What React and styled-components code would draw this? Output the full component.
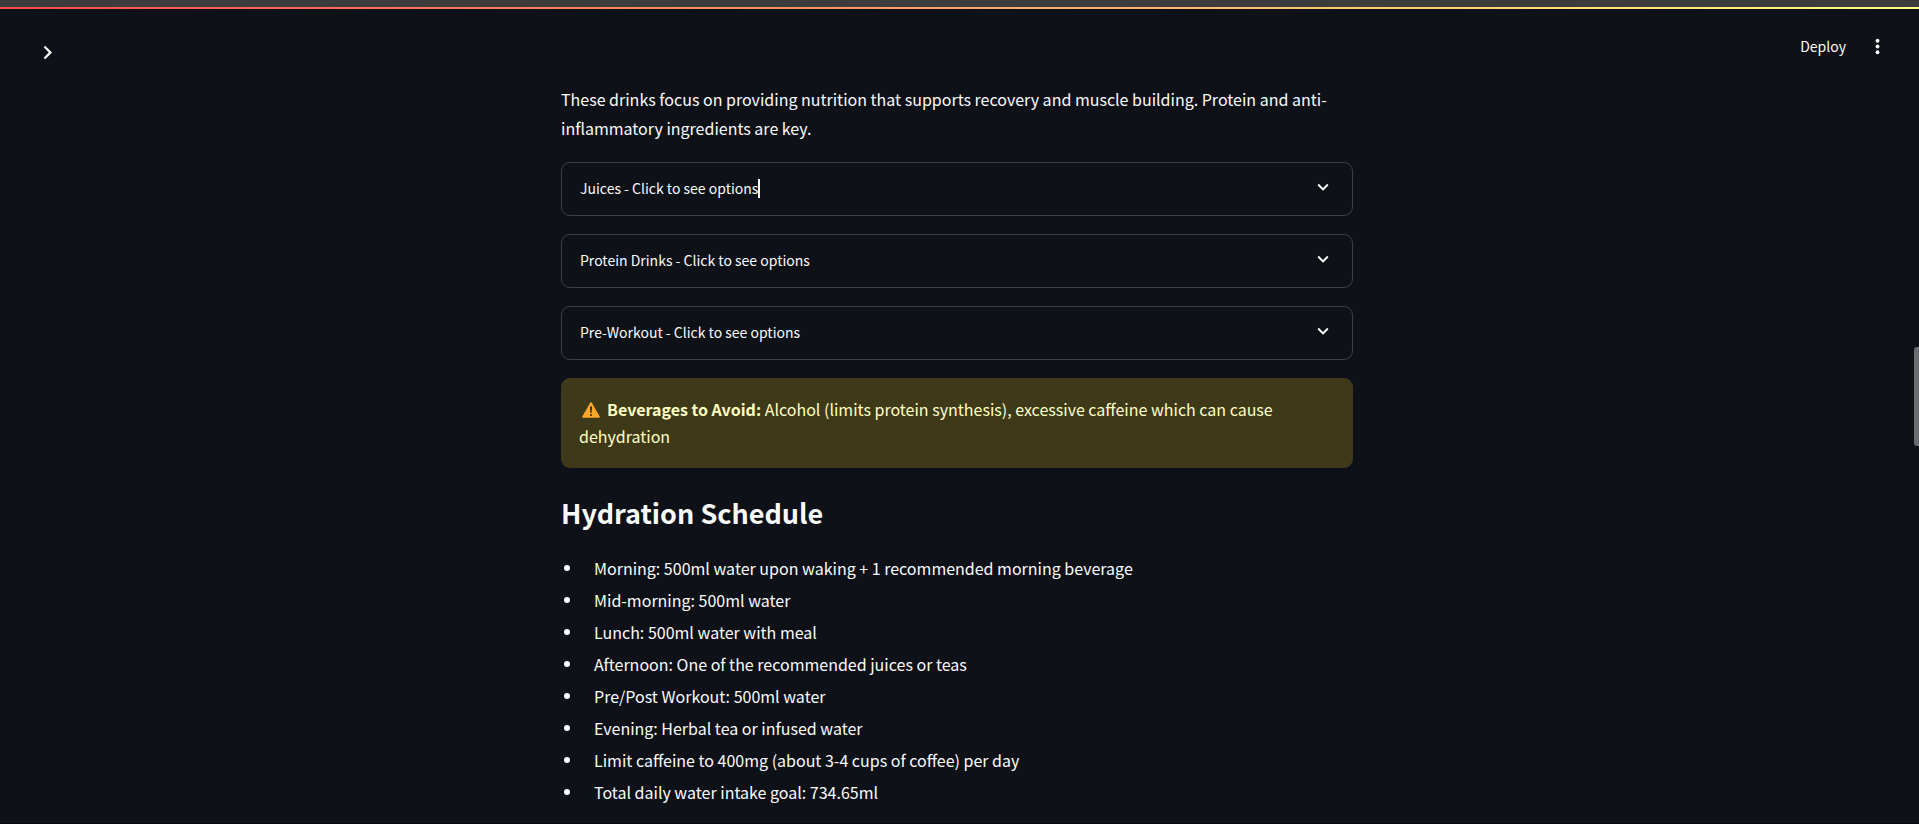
import React from "react";
import styled, { createGlobalStyle } from "styled-components";

const GlobalStyle = createGlobalStyle`
  * { box-sizing: border-box; }
  html { background: #0e1117; }
  body {
    margin: 0;
    background: #0e1117;
    color: #fafafa;
    font-family: "Source Sans Pro", "Noto Sans CJK JP", sans-serif;
    font-size: 16px;
    line-height: 29px;
  }
`;

const Shell = styled.div`
  min-height: 100vh;
  display: flex;
  flex-direction: column;
  padding-right: 5px;
  border-bottom: 1px solid #050608;
  position: relative;
`;

const TopStrip = styled.div`
  height: 9px;
  margin-right: -5px;
  background: #3c3c3c;
  display: flex;
  align-items: flex-end;
`;

const Decoration = styled.div`
  height: 2px;
  width: 100%;
  background: linear-gradient(to right, #ff4b4b, #fffd80);
`;

const Header = styled.header`
  display: flex;
  justify-content: space-between;
  align-items: flex-start;
  padding: 23px 25px 0 34px;
  height: 76px;
`;

const IconButton = styled.button`
  display: flex;
  padding: 0;
  margin-top: ${(p) => p.$drop || 0}px;
  border: 0;
  background: none;
  color: inherit;
  cursor: pointer;
`;

const Toolbar = styled.div`
  display: flex;
  align-items: center;
  gap: 20px;
`;

const DeployButton = styled.button`
  padding: 0;
  border: 0;
  background: none;
  color: inherit;
  font: inherit;
  font-size: 14px;
  line-height: 28px;
  cursor: pointer;
`;

const Icon = styled.svg`
  display: block;
  flex: none;
  width: ${(p) => p.$size}px;
  height: ${(p) => p.$size}px;
  fill: currentColor;
`;

const Content = styled.main`
  width: 100%;
  max-width: 792px;
  margin: 0 auto;
`;

const Intro = styled.p`
  margin: 0 0 19px;
`;

const Stack = styled.div`
  display: grid;
  gap: 18px;
`;

const Expander = styled.details`
  border: 1px solid #3d3f44;
  border-radius: 9px;
`;

const Summary = styled.summary`
  display: flex;
  justify-content: space-between;
  align-items: center;
  height: 52px;
  padding: 0 18px 2px;
  font-size: 14px;
  line-height: 26px;
  list-style: none;
  cursor: pointer;
`;

const ChevronSlot = styled.span`
  padding-bottom: 2px;
`;

const Label = styled.span`
  position: relative;
`;

const Caret = styled.span`
  position: absolute;
  right: -2px;
  top: 4px;
  width: 2px;
  height: 19px;
  background: #fff;
`;

const Alert = styled.div`
  padding: 18px;
  min-height: 90px;
  border-radius: 9px;
  background: #3e3918;
  color: #ffffc2;
  line-height: 27px;
`;

const WarningIcon = styled.svg`
  width: 18px;
  height: 16px;
  margin: 0 7px 0 3px;
  vertical-align: -2px;
`;

const Heading = styled.h2`
  margin: 26px 0 20px;
  font-size: 27px;
  line-height: 38px;
  font-weight: 700;
`;

const List = styled.ul`
  margin: 0;
  padding: 0;
  list-style: none;
`;

const Item = styled.li`
  display: flex;
  align-items: center;
  gap: 24px;
  padding-left: 3px;
  line-height: 32px;
  &::before {
    content: "";
    flex: none;
    width: 6px;
    height: 6px;
    border-radius: 50%;
    background: currentColor;
  }
`;

const ScrollThumb = styled.div`
  position: fixed;
  right: 0;
  top: 347px;
  width: 5px;
  height: 99px;
  border-radius: 3px 0 0 3px;
  background: #6b6c70;
`;

const drinks = ["Juices", "Protein Drinks", "Pre-Workout"];

const schedule = [
  "Morning: 500ml water upon waking + 1 recommended morning beverage",
  "Mid-morning: 500ml water",
  "Lunch: 500ml water with meal",
  "Afternoon: One of the recommended juices or teas",
  "Pre/Post Workout: 500ml water",
  "Evening: Herbal tea or infused water",
  "Limit caffeine to 400mg (about 3-4 cups of coffee) per day",
  "Total daily water intake goal: 734.65ml",
];

export default function App() {
  return (
    <>
      <GlobalStyle />
      <Shell>
        <TopStrip>
          <Decoration />
        </TopStrip>
        <Header>
          <IconButton $drop={7} aria-label="Open sidebar">
            <Icon $size={27} viewBox="0 0 24 24">
              <path d="M10 6 8.59 7.41 13.17 12l-4.58 4.59L10 18l6-6z" />
            </Icon>
          </IconButton>
          <Toolbar>
            <DeployButton>Deploy</DeployButton>
            <IconButton aria-label="Main menu">
              <Icon $size={23} viewBox="0 0 24 24">
                <circle cx="12" cy="6" r="2" />
                <circle cx="12" cy="12" r="2" />
                <circle cx="12" cy="18" r="2" />
              </Icon>
            </IconButton>
          </Toolbar>
        </Header>
        <Content>
          <Intro>
            These drinks focus on providing nutrition that supports recovery and
            muscle building. Protein and anti-inflammatory ingredients are key.
          </Intro>
          <Stack>
            {drinks.map((name, i) => (
              <Expander key={name}>
                <Summary>
                  <Label>
                    {name} - Click to see options
                    {i === 0 && <Caret />}
                  </Label>
                  <ChevronSlot>
                    <Icon $size={22} viewBox="0 0 24 24">
                      <path d="M7.41 8.59 12 13.17l4.59-4.58L18 10l-6 6-6-6z" />
                    </Icon>
                  </ChevronSlot>
                </Summary>
              </Expander>
            ))}
            <Alert role="alert">
              <WarningIcon viewBox="0 0 18 16" aria-hidden="true">
                <path
                  d="M9 1 17 15H1z"
                  fill="#ffa72b"
                  stroke="#ffa72b"
                  strokeWidth="1.6"
                  strokeLinejoin="round"
                />
                <path d="M8 4.6h2L9.6 11H8.4z" fill="#2b2b2b" />
                <circle cx="9" cy="13" r="1.1" fill="#2b2b2b" />
              </WarningIcon>
              <strong>Beverages to Avoid:</strong> Alcohol (limits protein
              synthesis), excessive caffeine which can cause dehydration
            </Alert>
          </Stack>
          <Heading>Hydration Schedule</Heading>
          <List>
            {schedule.map((text) => (
              <Item key={text}>{text}</Item>
            ))}
          </List>
        </Content>
        <ScrollThumb />
      </Shell>
    </>
  );
}
